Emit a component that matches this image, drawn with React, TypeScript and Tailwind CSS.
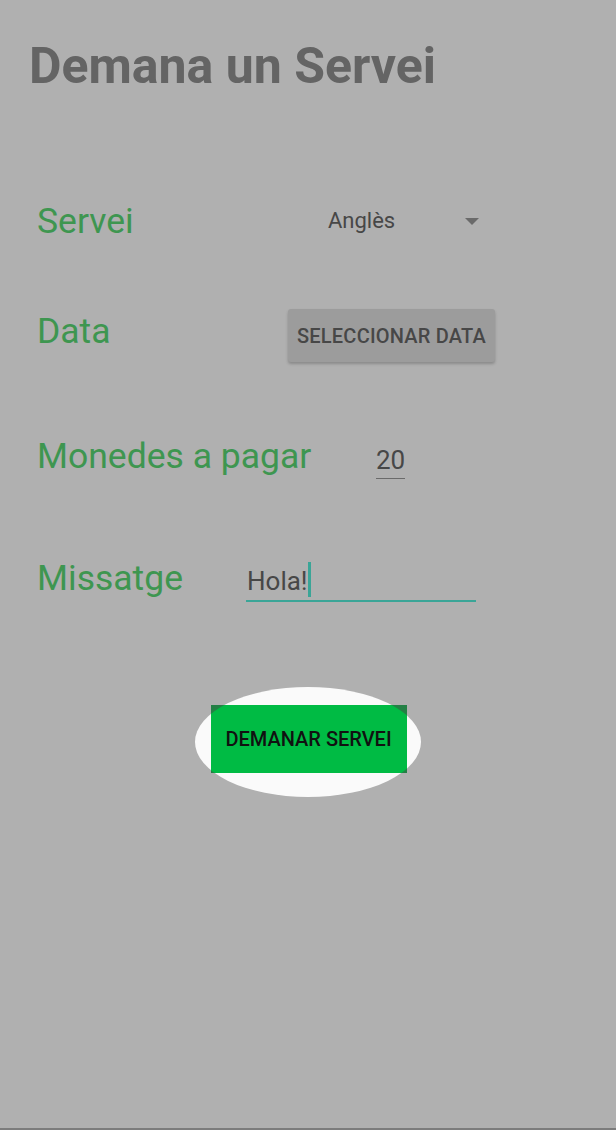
import { useState } from "react";

// Spotlight overlay over the "request a service" form
export default function App() {
  const [missatge] = useState("Hola!");

  return (
    <div className="h-[1130px] w-full overflow-hidden border-b-2 border-[#7c7c7c] bg-[#b0b0b0] font-['Roboto',sans-serif]">
      <h1 className="ml-[29px] pt-[41px] text-[50px] font-bold leading-[50px] text-[#646464]">
        Demana un Servei
      </h1>

      {/* Servei */}
      <div className="mt-[110px] flex h-[40px] items-start pl-[37px]">
        <span className="w-[291px] text-[35.5px] leading-[40px] text-[#3e9650]">Servei</span>
        <div className="mt-[7px] flex items-center">
          <span className="text-[22px] leading-[26px] text-[#474747]">Anglès</span>
          <span className="mt-[1px] ml-[70px] h-0 w-0 border-x-[7px] border-t-[7px] border-x-transparent border-t-[#6a6a6a]" />
        </div>
      </div>

      {/* Data */}
      <div className="mt-[68px] flex h-[53px] items-start pl-[37px]">
        <span className="mt-[2px] w-[251px] text-[35.5px] leading-[40px] text-[#3e9650]">Data</span>
        <button className="flex h-[53px] w-[207px] items-center justify-center rounded-[3px] bg-[#9c9c9c] text-[20px] font-medium tracking-[0.2px] text-[#474747] shadow-[0_2px_3px_rgba(0,0,0,0.22)]">
          SELECCIONAR DATA
        </button>
      </div>

      {/* Monedes */}
      <div className="mt-[74px] flex h-[44px] items-start pl-[37px]">
        <span className="w-[339px] text-[35.5px] leading-[40px] text-[#3e9650]">Monedes a pagar</span>
        <span className="mt-[9px] border-b border-[#6a6a6a] pb-[3px] text-[26px] leading-[30px] text-[#474747]">
          20
        </span>
      </div>

      {/* Missatge */}
      <div className="mt-[78px] flex h-[44px] items-start pl-[37px]">
        <span className="w-[209px] text-[35.5px] leading-[40px] text-[#3e9650]">Missatge</span>
        <div className="mt-[4px] flex h-[40px] w-[230px] items-start border-b-2 border-[#3aa597]">
          <span className="ml-[1px] mt-[4px] text-[26px] leading-[30px] text-[#474747]">{missatge}</span>
          <span className="h-[35px] w-[3px] bg-[#3aa597]" />
        </div>
      </div>

      {/* Spotlight button */}
      <div className="mt-[85px] flex justify-center">
        <div className="ml-[-1px] h-[110px] w-[226px] rounded-[50%] bg-[#fafafa] pl-[16px] pt-[18px]">
          <button className="relative flex h-[68px] w-[196px] items-center justify-center overflow-hidden bg-[#00bb44] text-[20px] font-medium text-[#111111]">
            <span className="absolute left-[-16px] top-[-18px] h-[110px] w-[226px] rounded-[50%] shadow-[0_0_0_120px_rgba(70,70,70,0.5)]" />
            <span className="relative">DEMANAR SERVEI</span>
          </button>
        </div>
      </div>
    </div>
  );
}
